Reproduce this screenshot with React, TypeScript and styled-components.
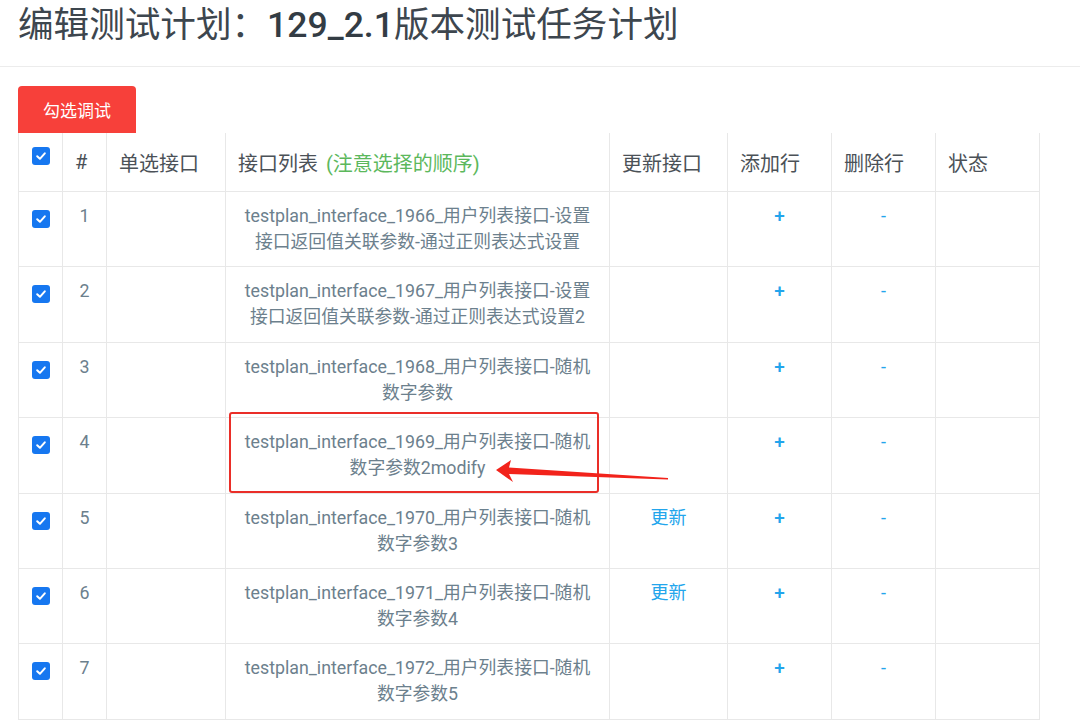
import React from 'react';
import styled, { createGlobalStyle } from 'styled-components';

const GlobalStyle = createGlobalStyle`
  html, body {
    margin: 0;
    padding: 0;
    background: #fff;
  }
  body {
    font-family: Roboto, "Noto Sans CJK SC", sans-serif;
  }
`;

type Row = {
  id: number;
  lines: string[];
  canUpdate?: boolean;
  marked?: boolean;
};

const rows: Row[] = [
  { id: 1, lines: ['testplan_interface_1966_用户列表接口-设置', '接口返回值关联参数-通过正则表达式设置'] },
  { id: 2, lines: ['testplan_interface_1967_用户列表接口-设置', '接口返回值关联参数-通过正则表达式设置2'] },
  { id: 3, lines: ['testplan_interface_1968_用户列表接口-随机', '数字参数'] },
  { id: 4, lines: ['testplan_interface_1969_用户列表接口-随机', '数字参数2modify'], marked: true },
  { id: 5, lines: ['testplan_interface_1970_用户列表接口-随机', '数字参数3'], canUpdate: true },
  { id: 6, lines: ['testplan_interface_1971_用户列表接口-随机', '数字参数4'], canUpdate: true },
  { id: 7, lines: ['testplan_interface_1972_用户列表接口-随机', '数字参数5'] }
];

const columns = [44, 44, 119, 384, 118, 104, 104, 104];

const Page = styled.div`
  width: 1080px;
  min-height: 720px;
  overflow: hidden;
`;

const Header = styled.div`
  height: 67px;
  padding-left: 18px;
  border-bottom: 1px solid #ececec;
  box-sizing: border-box;
`;

const Title = styled.h1`
  margin: 0;
  font-size: 35.6px;
  line-height: 51px;
  font-weight: 400;
  color: #3d464e;
  letter-spacing: 0;

  .num {
    font-weight: 500;
    color: #333c44;
  }
`;

const Body = styled.div`
  padding: 19px 0 0 18px;
`;

const DebugButton = styled.button`
  display: block;
  width: 118px;
  height: 47px;
  border: none;
  border-radius: 4px 4px 0 0;
  background: #f7403a;
  color: #fff;
  font-family: Roboto, "Noto Sans CJK SC", sans-serif;
  font-size: 17px;
  cursor: pointer;
`;

const Table = styled.table`
  width: 1021px;
  table-layout: fixed;
  border-collapse: collapse;
  border-left: 1px solid #e8e8e8;
  border-right: 1px solid #e8e8e8;
  border-bottom: 1px solid #e8e8e8;
`;

const HeadCell = styled.th`
  height: 58px;
  padding: 0 12px;
  text-align: left;
  vertical-align: middle;
  font-weight: 400;
  font-size: 20px;
  color: #4b5157;
  border-left: 1px solid #e8e8e8;
  border-bottom: 1px solid #e8e8e8;
  white-space: nowrap;
  overflow: visible;

  &:first-child {
    text-align: center;
    padding: 0;
  }

  .hint {
    margin-left: 8px;
    color: #5cb85c;
  }
`;

const BodyRow = styled.tr`
  height: 75.4px;
`;

const Cell = styled.td`
  position: relative;
  box-sizing: border-box;
  padding: 11px 6px 0;
  vertical-align: top;
  text-align: center;
  font-size: 17.8px;
  line-height: 26px;
  color: #6c808d;
  border-left: 1px solid #e8e8e8;
  border-bottom: 1px solid #e8e8e8;
  white-space: nowrap;
`;

const Check = styled.span<{ $top: number }>`
  display: inline-flex;
  align-items: center;
  justify-content: center;
  width: 18px;
  height: 18px;
  margin-top: ${(p) => p.$top}px;
  border-radius: 3px;
  background: #1677f0;
  vertical-align: top;
`;

const Link = styled.span<{ $strong?: boolean }>`
  color: #22a5ec;
  font-size: ${(p) => (p.$strong ? '19px' : '18px')};
  font-weight: ${(p) => (p.$strong ? 500 : 400)};
  cursor: pointer;
`;

const Marker = styled.div`
  position: absolute;
  left: 3px;
  top: -6px;
  width: 370px;
  height: 81px;
  box-sizing: border-box;
  border: 2px solid #ea2e28;
  border-radius: 3px;
  pointer-events: none;
`;

const Arrow = styled.svg`
  position: absolute;
  left: 270px;
  top: 40px;
  overflow: visible;
  pointer-events: none;
`;

function CheckBox ({ top }: { top: number }) {
  return (
    <Check $top={top}>
      <svg width='12' height='12' viewBox='0 0 12 12'>
        <path d='M2.2 6.2 L4.9 8.8 L9.8 3.3' fill='none' stroke='#fff' strokeWidth='2' strokeLinecap='round' strokeLinejoin='round' />
      </svg>
    </Check>
  );
}

export default function App () {
  return (
    <Page>
      <GlobalStyle />
      <Header>
        <Title>编辑测试计划：<span className='num'>129_2.1</span>版本测试任务计划</Title>
      </Header>
      <Body>
        <DebugButton>勾选调试</DebugButton>
        <Table>
          <colgroup>
            {columns.map((w, i) => <col key={i} style={{ width: w }} />)}
          </colgroup>
          <thead>
            <tr>
              <HeadCell><CheckBox top={-3} /></HeadCell>
              <HeadCell>#</HeadCell>
              <HeadCell>单选接口</HeadCell>
              <HeadCell>接口列表<span className='hint'>(注意选择的顺序)</span></HeadCell>
              <HeadCell>更新接口</HeadCell>
              <HeadCell>添加行</HeadCell>
              <HeadCell>删除行</HeadCell>
              <HeadCell>状态</HeadCell>
            </tr>
          </thead>
          <tbody>
            {rows.map((row) => (
              <BodyRow key={row.id}>
                <Cell><CheckBox top={7} /></Cell>
                <Cell>{row.id}</Cell>
                <Cell />
                <Cell>
                  {row.lines.map((line, i) => <div key={i}>{line}</div>)}
                  {row.marked && (
                    <>
                      <Marker />
                      <Arrow width='172' height='24' viewBox='0 0 172 24'>
                        <path d='M0 12 L15 2 L13 9.5 L172 20 L172 21.5 L13 16 L17 24 Z' fill='#f2231b' />
                      </Arrow>
                    </>
                  )}
                </Cell>
                <Cell>{row.canUpdate && <Link>更新</Link>}</Cell>
                <Cell><Link $strong>+</Link></Cell>
                <Cell><Link>-</Link></Cell>
                <Cell />
              </BodyRow>
            ))}
          </tbody>
        </Table>
      </Body>
    </Page>
  );
}
